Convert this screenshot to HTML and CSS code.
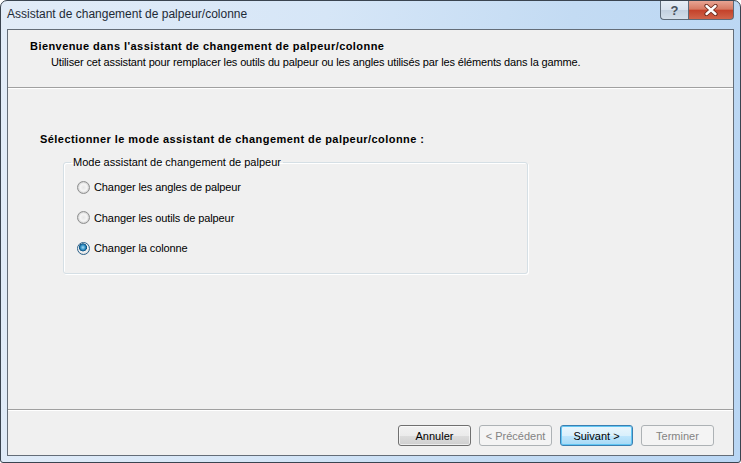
FILE: index.html
```html
<!DOCTYPE html>
<html lang="fr">
<head>
  <meta charset="UTF-8">
  <title>Assistant de changement de palpeur/colonne</title>
  <link rel="stylesheet" href="styles.css">
</head>
<body>

  <div class="window">
    <div class="titlebar">
      <span class="title">Assistant de changement de palpeur/colonne</span>
      <div class="caption-buttons">
        <span class="cap-btn help">?</span>
        <span class="cap-btn close">
          <svg width="16" height="12" viewBox="0 0 16 12">
            <path d="M3.5 2 L12.5 10 M12.5 2 L3.5 10" stroke="#6a2a1c" stroke-width="4.2" stroke-linecap="round"/>
            <path d="M3.5 2 L12.5 10 M12.5 2 L3.5 10" stroke="#fff" stroke-width="2.4" stroke-linecap="round"/>
          </svg>
        </span>
      </div>
    </div>

    <div class="client">
      <div class="header">
        <div class="header-title">Bienvenue dans l'assistant de changement de palpeur/colonne</div>
        <div class="header-sub">Utiliser cet assistant pour remplacer les outils du palpeur ou les angles utilisés par les éléments dans la gamme.</div>
      </div>

      <div class="content">
        <div class="section-label">Sélectionner le mode assistant de changement de palpeur/colonne :</div>
        <fieldset class="group">
          <legend>Mode assistant de changement de palpeur</legend>
          <label class="radio-row"><span class="radio"></span>Changer les angles de palpeur</label>
          <label class="radio-row"><span class="radio"></span>Changer les outils de palpeur</label>
          <label class="radio-row"><span class="radio checked"></span>Changer la colonne</label>
        </fieldset>
      </div>

      <div class="footer">
        <span class="button">Annuler</span>
        <span class="button disabled">&lt; Précédent</span>
        <span class="button default">Suivant &gt;</span>
        <span class="button disabled">Terminer</span>
      </div>
    </div>
  </div>

</body>
</html>
```

FILE: styles.css
```css
body {
  margin: 0;
  background-color: #ffffff;
  font-family: "Liberation Sans", Arial, sans-serif;
  font-size: 11px;
  color: #000;
}
.window {
  width: 741px;
  height: 463px;
  box-sizing: border-box;
  border: 1px solid #3a4450;
  border-radius: 7px 7px 3px 3px;
  background: linear-gradient(100deg, #e2ecf8 0%, #d6e6f7 40%, #c3dbf3 70%, #b9d6f4 100%);
  padding: 0 6px 6px 6px;
  display: flex;
  flex-direction: column;
}
.titlebar {
  height: 28px;
  display: flex;
  justify-content: space-between;
  align-items: flex-start;
}
.title {
  font-size: 12px;
  color: #1e2a36;
  margin-top: 6px;
}
.caption-buttons {
  display: flex;
}
.cap-btn {
  height: 19px;
  box-sizing: border-box;
  border: 1px solid #5d6a78;
  border-top: none;
  display: flex;
  align-items: center;
  justify-content: center;
}
.help {
  width: 28px;
  border-radius: 0 0 0 4px;
  border-right: none;
  background: linear-gradient(#e6edf5 0%, #d8e2ee 50%, #c2d0df 51%, #d3dfeb 100%);
  color: #46505c;
  font-weight: bold;
  font-size: 13px;
}
.close {
  width: 46px;
  border-radius: 0 0 4px 0;
  background: linear-gradient(#e8a493 0%, #d77a63 45%, #c4422b 52%, #d0644a 100%);
}
.client {
  flex: 1;
  border: 1px solid #646d78;
  background-color: #f0f0f0;
  display: flex;
  flex-direction: column;
}
.header {
  height: 48px;
  padding: 9px 0 0 22px;
  border-bottom: 1px solid #a0a0a0;
}
.header-title {
  font-weight: bold;
  line-height: 14px;
  letter-spacing: 0.44px;
}
.header-sub {
  margin-top: 2px;
  padding-left: 21px;
  line-height: 14px;
  letter-spacing: -0.14px;
}
.content {
  flex: 1;
  border-top: 1px solid #ffffff;
  padding: 43px 0 0 32px;
}
.section-label {
  font-weight: bold;
  line-height: 14px;
  letter-spacing: 0.44px;
}
.group {
  width: 465px;
  height: 119px;
  box-sizing: border-box;
  margin: 9px 0 0 23px;
  padding: 10px 0 0 13px;
  border: 1px solid #d5dfe5;
  border-radius: 3px;
  box-shadow: inset 1px 1px 0 #fff, 1px 1px 0 #fff;
}
.group legend {
  padding: 0 2px;
  margin-left: -6px;
  line-height: 14px;
}
.radio-row {
  display: flex;
  align-items: center;
  height: 16px;
  margin-bottom: 14.5px;
  letter-spacing: -0.1px;
}
.radio {
  width: 11px;
  height: 11px;
  border: 1px solid #8e8f8f;
  border-radius: 50%;
  margin-right: 4px;
  background: radial-gradient(circle at 50% 50%, #e6e6e6 0%, #f6f6f6 45%, #d2d2d2 70%, #eeeeee 100%);
}
.radio.checked {
  border-color: #2c628b;
  background: radial-gradient(circle at 45% 40%, #a8dcf5 0%, #2a8ac0 28%, #0d4f7e 42%, #f4f4f4 48%, #dcdcdc 80%, #f0f0f0 100%);
}
.footer {
  height: 46px;
  box-sizing: border-box;
  border-top: 1px solid #a0a0a0;
  box-shadow: inset 0 1px 0 #ffffff;
  display: flex;
  justify-content: flex-end;
  align-items: flex-start;
  gap: 8px;
  padding: 15px 19px 0 0;
}
.button {
  width: 73px;
  height: 21px;
  box-sizing: border-box;
  border: 1px solid #707070;
  border-radius: 3px;
  background: linear-gradient(#f2f2f2 0%, #ebebeb 50%, #dddddd 51%, #cfcfcf 100%);
  box-shadow: inset 0 0 0 1px rgba(255, 255, 255, 0.6);
  display: flex;
  align-items: center;
  justify-content: center;
}
.button.default {
  border-color: #3c7fb1;
  background: linear-gradient(#eaf6fd 0%, #d9f0fc 50%, #bee6fd 51%, #a7d9f5 100%);
  box-shadow: inset 0 0 0 1px #62c7f4;
}
.button.disabled {
  border-color: #adb2b5;
  background: #f4f4f4;
  color: #838383;
  box-shadow: none;
}
```
